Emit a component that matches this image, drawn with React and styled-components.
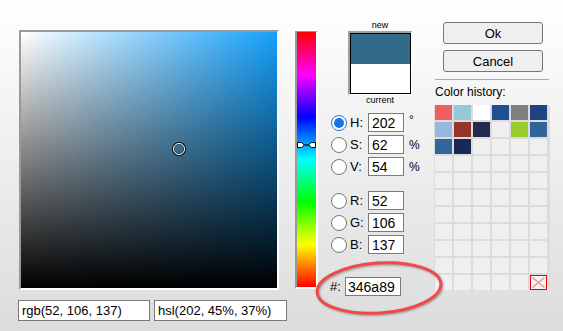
import React from 'react'
import styled, { createGlobalStyle, css } from 'styled-components'

const GlobalStyle = createGlobalStyle`
  html, body {
    margin: 0;
    padding: 0;
    background: linear-gradient(to bottom, #ffffff, #dcdcdc) no-repeat;
    font-family: "Liberation Sans", Arial, sans-serif;
    color: #000;
  }
`

const history = [
  '#f05f5f', '#98c8d8', '#ffffff', '#1f5096', '#7f7f7f', '#1e4484',
  '#95b8dc', '#95342a', '#232b4f', null, '#99cc2b', '#2f6599',
  '#33669a', '#172a57',
]

function App() {
  const cells = Array.from({ length: 66 }, (_, i) => history[i] || null)

  return (
    <Page>
      <GlobalStyle />
      <LeftCol>
        <SatVal>
          <Cursor />
        </SatVal>
        <TextRow>
          <TextBox width={132}>rgb(52, 106, 137)</TextBox>
          <TextBox width={133}>hsl(202, 45%, 37%)</TextBox>
        </TextRow>
      </LeftCol>

      <HueBar>
        <HueMarker width="23" height="8" viewBox="0 0 23 8">
          <path d="M2.5 1.5h4l3 2.5-3 2.5h-4z" fill="#fff" stroke="#000" />
          <path d="M9.5 4h5" stroke="#000" strokeWidth="1.2" />
          <path d="M20.5 1.5h-4l-3 2.5 3 2.5h4z" fill="#fff" stroke="#000" />
        </HueMarker>
      </HueBar>

      <MidCol>
        <Preview>
          <Caption>new</Caption>
          <Swatch>
            <Half color="#346a89" />
            <Half color="#ffffff" />
          </Swatch>
          <Caption>current</Caption>
        </Preview>

        <FieldGroup>
          <Field label="H:" value="202" unit="°" checked />
          <Field label="S:" value="62" unit="%" />
          <Field label="V:" value="54" unit="%" />
        </FieldGroup>
        <FieldGroup top={15}>
          <Field label="R:" value="52" />
          <Field label="G:" value="106" />
          <Field label="B:" value="137" />
        </FieldGroup>

        <HexRow>
          <HexLabel>#:</HexLabel>
          <HexBox>346a89</HexBox>
        </HexRow>
      </MidCol>

      <RightCol>
        <Button>Ok</Button>
        <Button top={6}>Cancel</Button>
        <Rule />
        <HistoryTitle>Color history:</HistoryTitle>
        <HistoryGrid>
          {cells.map((c, i) =>
            i === 65 ? (
              <ClearCell key={i}>
                <svg width="15" height="13" viewBox="0 0 15 13">
                  <path d="M1.5 1.5l12 10M13.5 1.5l-12 10" stroke="#f08a8a" strokeWidth="1.2" />
                </svg>
              </ClearCell>
            ) : (
              <Cell key={i} color={c} />
            )
          )}
        </HistoryGrid>
      </RightCol>

      <Highlight width="140" height="70" viewBox="0 0 140 70">
        <ellipse cx="67" cy="35" rx="62" ry="25" transform="rotate(-4 67 35)"
          fill="none" stroke="#f24848" strokeWidth="3" />
      </Highlight>
    </Page>
  )
}

function Field({ label, value, unit, checked }) {
  return (
    <FieldRow>
      <Radio checked={checked} />
      <FieldLabel>{label}</FieldLabel>
      <NumBox>{value}</NumBox>
      {unit && <Unit>{unit}</Unit>}
    </FieldRow>
  )
}

export default App

const Page = styled.div`
  position: relative;
  width: 563px;
  height: 331px;
  display: flex;
  padding-left: 18px;
  box-sizing: border-box;
  overflow: hidden;
`

const LeftCol = styled.div`
  display: flex;
  flex-direction: column;
  padding-top: 30px;
  width: 269px;
`

const SatVal = styled.div`
  position: relative;
  margin-left: 1px;
  width: 256px;
  height: 256px;
  border: 2px solid #999;
  border-right-color: #fff;
  border-bottom-color: #fff;
  background:
    linear-gradient(to top, #000, rgba(0, 0, 0, 0)),
    linear-gradient(to right, #fff, rgba(255, 255, 255, 0)),
    rgb(20, 160, 250);
`

const Cursor = styled.div`
  position: absolute;
  left: 152px;
  top: 111px;
  width: 10px;
  height: 10px;
  border-radius: 50%;
  border: 1.5px solid #fff;
  box-shadow: 0 0 0 1px #000, inset 0 0 0 0.5px #000;
`

const TextRow = styled.div`
  display: flex;
  gap: 4px;
  margin-top: 10px;
`

const inputLook = css`
  box-sizing: border-box;
  background: #fff;
  border: 1px solid #7a7a7a;
  display: flex;
  align-items: center;
  color: #000;
  white-space: nowrap;
`

const TextBox = styled.div`
  ${inputLook}
  width: ${p => p.width}px;
  height: 21px;
  padding-left: 3px;
  font-size: 13px;
`

const HueBar = styled.div`
  position: relative;
  margin-left: 8px;
  margin-top: 31px;
  width: 19px;
  height: 255px;
  border: 2px solid #999;
  border-top-width: 1px;
  border-right-color: #fff;
  border-bottom-color: #fff;
  background: linear-gradient(to bottom,
    #f00 0%, #f0f 16.67%, #00f 33.33%, #0ff 50%, #0f0 66.67%, #ff0 83.33%, #f00 100%);
`

const HueMarker = styled.svg`
  position: absolute;
  left: -2px;
  top: 109px;
`

const MidCol = styled.div`
  width: 117px;
  display: flex;
  flex-direction: column;
`

const Preview = styled.div`
  display: flex;
  flex-direction: column;
  align-items: center;
  width: 64px;
  margin-left: 30px;
  padding-top: 21px;
`

const Caption = styled.div`
  font-size: 9px;
  line-height: 11px;
  height: 11px;
  margin-top: ${p => (p.children === 'current' ? 0 : -1)}px;
`

const Swatch = styled.div`
  width: 64px;
  height: 64px;
  box-sizing: border-box;
  border: 2px solid #a0a0a0;
  border-right: 1px solid #fff;
  border-bottom: 1px solid #fff;
  display: flex;
  flex-direction: column;
  position: relative;
  &::after {
    content: '';
    position: absolute;
    inset: 0;
    border: 1px solid #000;
  }
`

const Half = styled.div`
  flex: 1;
  background: ${p => p.color};
`

const FieldGroup = styled.div`
  display: flex;
  flex-direction: column;
  gap: 3px;
  margin-top: ${p => (p.top ? p.top : 7)}px;
`

const FieldRow = styled.div`
  display: flex;
  align-items: center;
  height: 19px;
  padding-left: 13px;
`

const Radio = styled.span`
  box-sizing: border-box;
  width: 16px;
  height: 16px;
  border-radius: 50%;
  border: ${p => (p.checked ? '1.5px solid #1a73e8' : '1px solid #767676')};
  background: #fff;
  position: relative;
  ${p => p.checked && css`
    &::after {
      content: '';
      position: absolute;
      inset: 2px;
      border-radius: 50%;
      background: #1a73e8;
    }
  `}
`

const FieldLabel = styled.span`
  width: 18px;
  margin-left: 3px;
  font-size: 13px;
`

const NumBox = styled.div`
  ${inputLook}
  width: 36px;
  height: 19px;
  padding-left: 3px;
  font-size: 14px;
`

const Unit = styled.span`
  margin-left: 5px;
  font-size: 12px;
  align-self: ${p => (p.children === '°' ? 'flex-start' : 'center')};
`

const HexRow = styled.div`
  display: flex;
  align-items: center;
  margin-top: 23px;
  padding-left: 12px;
`

const HexLabel = styled.span`
  width: 15px;
  font-size: 13px;
`

const HexBox = styled.div`
  ${inputLook}
  width: 56px;
  height: 19px;
  padding-left: 2px;
  font-size: 14px;
`

const RightCol = styled.div`
  width: 116px;
  display: flex;
  flex-direction: column;
  padding-top: 22px;
`

const Button = styled.div`
  box-sizing: border-box;
  width: 100px;
  height: 22px;
  margin-left: 8px;
  margin-top: ${p => p.top || 0}px;
  border: 1px solid #777;
  border-radius: 3px;
  background: #efefef;
  display: flex;
  align-items: center;
  justify-content: center;
  font-size: 13px;
`

const Rule = styled.div`
  height: 1px;
  background: #a8a8a8;
  margin-top: 7px;
  width: 114px;
`

const HistoryTitle = styled.div`
  font-size: 12px;
  line-height: 14px;
  margin-top: 5px;
  height: 20px;
`

const HistoryGrid = styled.div`
  display: grid;
  grid-template-columns: repeat(6, 17px);
  grid-auto-rows: 15px;
  gap: 2px;
  padding: 0 1px;
  width: 116px;
  box-sizing: border-box;
  margin-left: -1px;
  background: #dcdcdc;
`

const Cell = styled.div`
  background: ${p => p.color || '#efefef'};
`

const ClearCell = styled.div`
  box-sizing: border-box;
  border: 1px solid #e00;
  background: #f3f3f3;
  display: flex;
  align-items: center;
  justify-content: center;
  svg { display: block; }
`

const Highlight = styled.svg`
  position: absolute;
  left: 312px;
  top: 253px;
  filter: drop-shadow(1px 1px 1px rgba(0, 0, 0, 0.35));
`
